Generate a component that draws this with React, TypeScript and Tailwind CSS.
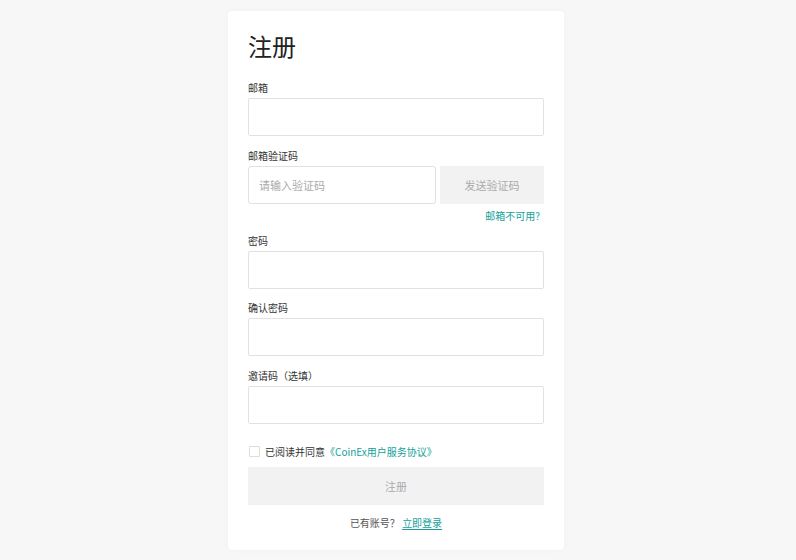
import React from 'react';

const font = { fontFamily: '"Noto Sans CJK SC", "Noto Sans", sans-serif' };

const Field = ({ label, mt }: { label: string; mt: string }) => (
  <div className={mt}>
    <p className="text-[10px] leading-[14px] text-[#333]">{label}</p>
    <input className="mt-[3px] block w-full h-[38px] border border-[#e1e1e1] rounded-[2px] bg-white outline-none px-2.5 text-[11px]" />
  </div>
);

const App = () => {
  return (
    <div className="min-h-[560px] bg-[#f7f7f8] flex justify-center pr-1 pt-[11px]" style={font}>
      <div className="w-[336px] h-[539px] bg-white rounded-[4px] shadow-[0_0_6px_rgba(0,0,0,0.03)] px-5 pt-[21px]">
        <h1 className="text-[24px] leading-[28px] text-[#222]">注册</h1>

        <Field label="邮箱" mt="mt-[21px]" />

        <div className="mt-[13px]">
          <p className="text-[10px] leading-[14px] text-[#333]">邮箱验证码</p>
          <div className="mt-[3px] flex gap-1">
            <input
              placeholder="请输入验证码"
              className="w-[188px] h-[38px] border border-[#e1e1e1] rounded-[3px] outline-none px-2.5 text-[11px] placeholder:text-[#aaa]"
            />
            <button className="flex-1 h-[38px] bg-[#f2f2f2] text-[11px] text-[#aaa]">发送验证码</button>
          </div>
          <div className="mt-[5px] flex justify-end pr-1">
            <a className="text-[10px] leading-[14px] text-[#14a19a]">邮箱不可用?</a>
          </div>
        </div>

        <Field label="密码" mt="mt-[11px]" />
        <Field label="确认密码" mt="mt-[12px]" />
        <Field label="邀请码（选填）" mt="mt-[13px]" />

        <div className="mt-[20px] flex items-center h-[14px]">
          <span className="w-[11px] h-[11px] border border-[#ddd] rounded-[1px] ml-px" />
          <span className="ml-[5px] text-[10px] text-[#333]">已阅读并同意</span>
          <a className="text-[10px] text-[#14a19a]">《CoinEx用户服务协议》</a>
        </div>

        <button className="mt-[9px] w-full h-[38px] bg-[#f2f2f2] text-[11px] text-[#aaa]">注册</button>

        <p className="mt-[11px] text-center text-[10px] leading-[14px] text-[#555]">
          已有账号？ <a className="text-[#14a19a] underline underline-offset-2">立即登录</a>
        </p>
      </div>
    </div>
  );
};

export default App;
